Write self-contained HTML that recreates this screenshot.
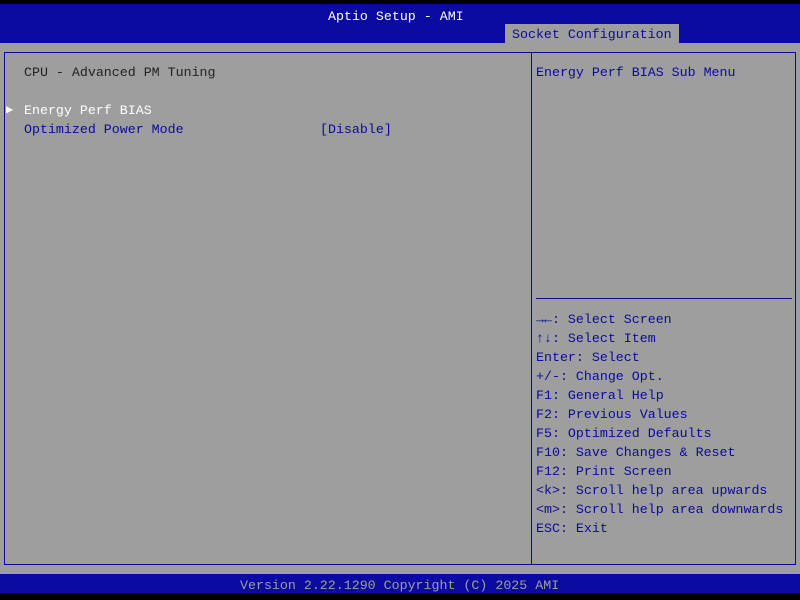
<html><head><style>
body{margin:0;width:800px;height:600px;background:#000;position:relative;overflow:hidden;font-family:"Liberation Mono","DejaVu Sans Mono",monospace;font-size:13.3px}
div{position:absolute;white-space:pre;line-height:19px}
.b{color:#0a0a9c}
</style></head><body>
<div style="left:0;top:4px;width:800px;height:39px;background:#0a0aa0"></div>
<div style="left:0;top:43px;width:800px;height:531px;background:#9e9e9e"></div>
<div style="left:0;top:574px;width:800px;height:19px;background:#0a0aa0"></div>
<div style="left:328px;top:7px;color:#fff">Aptio Setup - AMI</div>
<div style="left:505px;top:24px;width:174px;height:19px;background:#9e9e9e"></div>
<div class="b" style="left:512px;top:25px">Socket Configuration</div>
<div style="left:4px;top:52px;width:790px;height:511px;border:1px solid #0a0a9c"></div>
<div style="left:531px;top:52px;width:1px;height:513px;background:#0a0a9c"></div>
<div style="left:536px;top:298px;width:256px;height:1px;background:#0a0a9c"></div>
<div style="left:24px;top:63px;color:#222">CPU - Advanced PM Tuning</div>
<div style="left:6px;top:101px;color:#fff;font-size:12px">&#9654;</div>
<div style="left:24px;top:101px;color:#fff">Energy Perf BIAS</div>
<div class="b" style="left:24px;top:120px">Optimized Power Mode</div>
<div class="b" style="left:320px;top:120px">[Disable]</div>
<div class="b" style="left:536px;top:63px">Energy Perf BIAS Sub Menu</div>
<div class="b" style="left:536px;top:310px"><b>&#8594;&#8592;</b>: Select Screen
<b>&#8593;&#8595;</b>: Select Item
Enter: Select
+/-: Change Opt.
F1: General Help
F2: Previous Values
F5: Optimized Defaults
F10: Save Changes &amp; Reset
F12: Print Screen
&lt;k&gt;: Scroll help area upwards
&lt;m&gt;: Scroll help area downwards
ESC: Exit</div>
<div style="left:240px;top:576px;color:#9e9e9e">Version 2.22.1290 Copyright (C) 2025 AMI</div>
</body></html>
